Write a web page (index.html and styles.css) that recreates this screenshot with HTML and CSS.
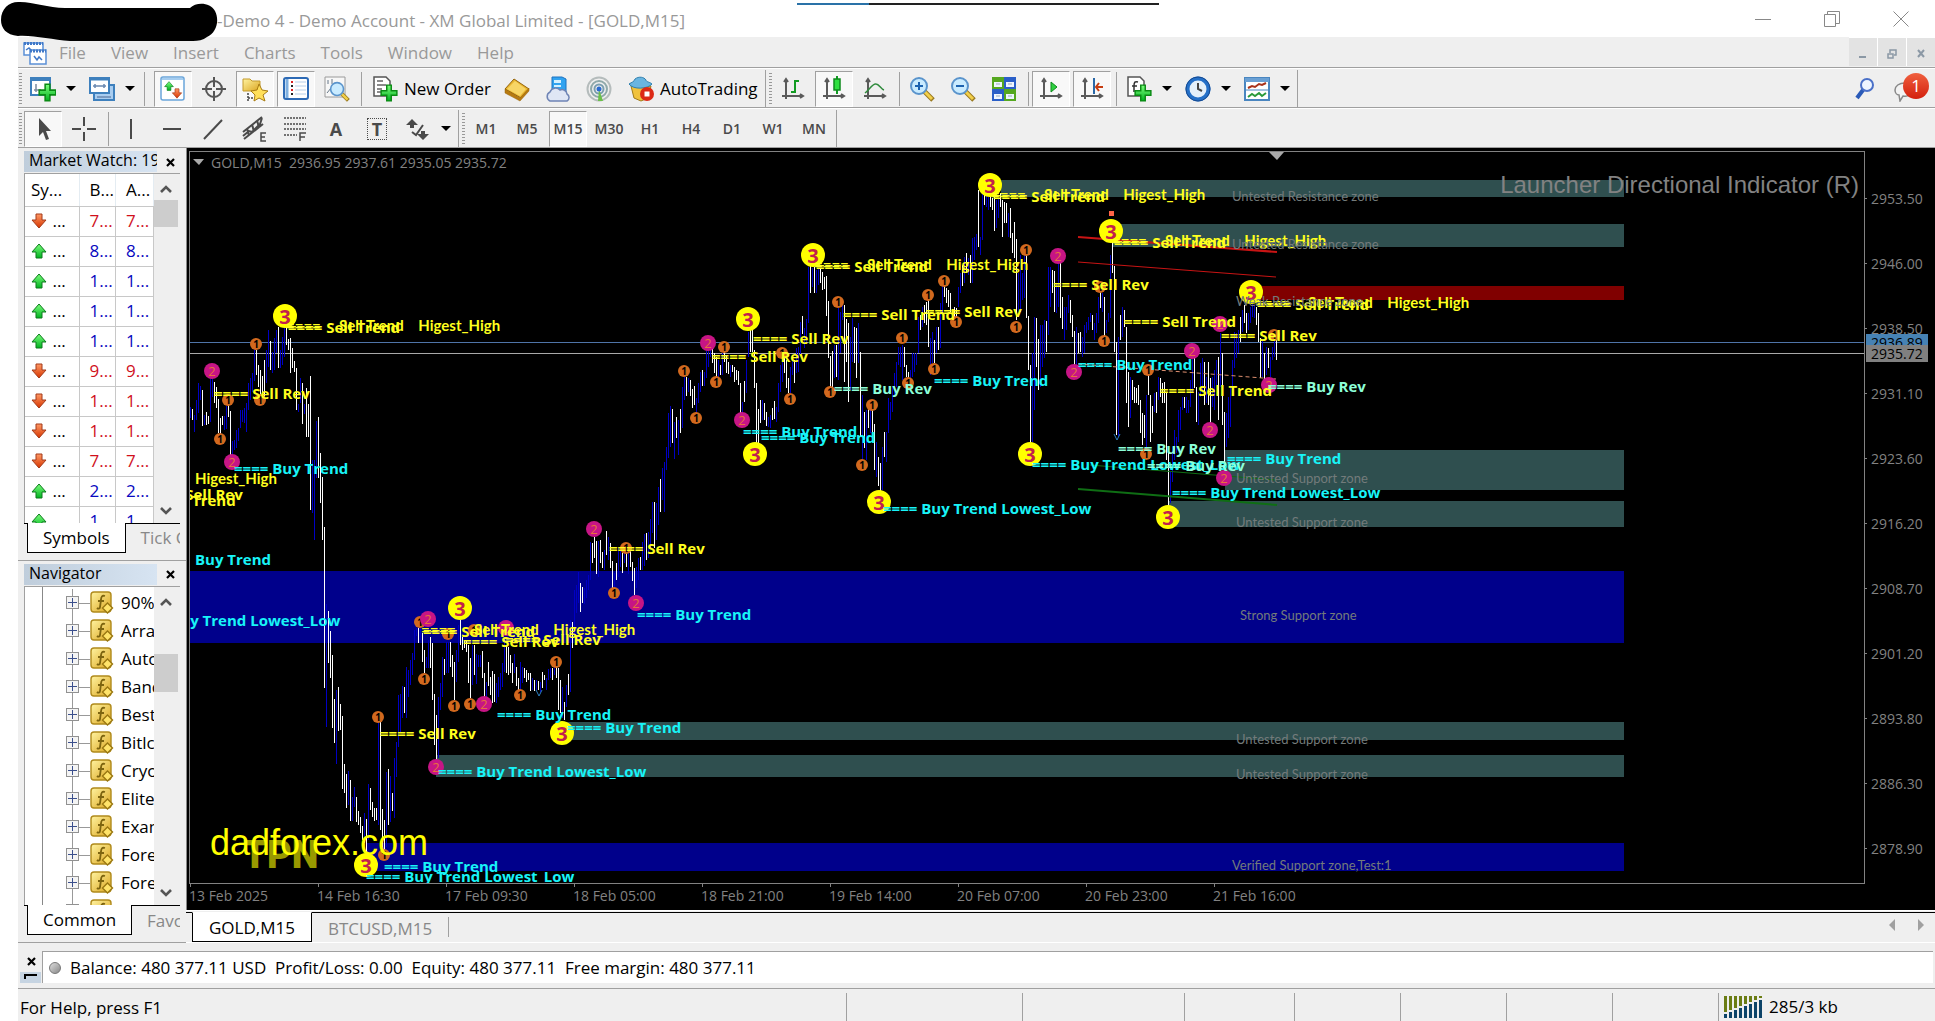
FILE: index.html
```
<!DOCTYPE html>
<html lang="en">
<head>
<meta charset="UTF-8">
<meta name="viewport" content="width=device-width, initial-scale=1.0">
<title>Demo Account - XM Global Limited - [GOLD,M15]</title>
<link rel="stylesheet" href="styles.css">
</head>
<body>
<svg class="defs" width="0" height="0">
  <defs>
    <linearGradient id="gGreen" x1="0" y1="0" x2="0" y2="1"><stop offset="0" stop-color="#7dff7d"/><stop offset="1" stop-color="#00b020"/></linearGradient>
    <linearGradient id="gGold" x1="0" y1="0" x2="1" y2="1"><stop offset="0" stop-color="#fff3a0"/><stop offset="1" stop-color="#dba520"/></linearGradient>
    <linearGradient id="gRed" x1="0" y1="0" x2="0" y2="1"><stop offset="0" stop-color="#ff9a66"/><stop offset="1" stop-color="#d63500"/></linearGradient>
    <symbol id="plus" viewBox="0 0 16 16"><path d="M6 1h4v5h5v4h-5v5H6v-5H1V6h5z" fill="url(#gGreen)" stroke="#0a8a14" stroke-width="1.3"/></symbol>
    <symbol id="axes" viewBox="0 0 26 26"><path d="M6 3v20M2 20h21M4 6l2-3 2 3M20 18l3 2-3 2" fill="none" stroke="#5a5a5a" stroke-width="2"/></symbol>
    <symbol id="down" viewBox="0 0 18 16"><path d="M6 1h6v6h4l-7 8-7-8h4z" fill="url(#gRed)" stroke="#a33a1a"/></symbol>
    <symbol id="up" viewBox="0 0 18 16"><path d="M6 15h6V9h4L9 1 2 9h4z" fill="url(#gGreen)" stroke="#0c7a1c"/></symbol>
    <symbol id="lens" viewBox="0 0 26 26"><path d="M15 15l9 9" stroke="#9a7a20" stroke-width="5"/><path d="M15 15l8 8" stroke="#f2cf4a" stroke-width="3"/><circle cx="10" cy="10" r="8" fill="#c9ebff" stroke="#5a94cc" stroke-width="2"/></symbol>
    <symbol id="fx" viewBox="0 0 24 24"><rect x="1" y="1" width="20" height="20" rx="3" fill="url(#gGold)" stroke="#b08a1c" stroke-width="1.4"/><path d="M15 5c-3-1-4 1-4 4l-1 7c0 2-2 2-3 1M8 10h6" fill="none" stroke="#7d6410" stroke-width="1.8"/><path d="M17.500 12l5 5-5 5-5-5z" fill="#ffe36a" stroke="#9a7712" stroke-width="1.4"/></symbol>
    <symbol id="chev" viewBox="0 0 14 10"><path d="M2 8l5-5 5 5" fill="none" stroke="#555" stroke-width="2.6"/></symbol>
  </defs>
</svg>

<div class="titleBar">
  <svg class="scribble" width="218" height="43" viewBox="0 0 218 43"><path d="M1 20C1 8 10 1 20 2c14 0 28 6 45 6h125c6-6 20-6 25 3 5 10 1 22-8 26-4 3-9 4-14 4H70c-18-1-36-6-52-5C6 35 1 28 1 20z"/></svg>
  <div class="progress"></div>
  <div class="titleText">-Demo 4 - Demo Account - XM Global Limited - [GOLD,M15]</div>
  <div class="winControls">
    <button aria-label="Minimize"><svg width="16" height="16"><path d="M0 8.500h16"/></svg></button>
    <button aria-label="Restore"><svg width="16" height="16"><path d="M.5 3.500h11v12h-11zM3.500 3.500v-3h12v12h-4"/></svg></button>
    <button aria-label="Close"><svg width="16" height="16"><path d="M.5.5l15 15M15.500.5l-15 15"/></svg></button>
  </div>
</div>

<div class="app">
  <div class="menuBar">
    <svg width="24" height="24" viewBox="0 0 24 24"><g fill="#fff" stroke="#5b90d6" stroke-width="1.500"><path d="M1 2h19v12H1z"/><path d="M7 9h16v14H7z"/></g><path d="M1 2.500h19M7 10h16" stroke="#3f78c8" stroke-width="3" stroke-dasharray="2 1"/><path d="M3 9l3-2 2 2M11 15l3 4 2-3 3 3" fill="none" stroke="#3f78c8" stroke-width="1.500"/></svg>
    <button>File</button><button>View</button><button>Insert</button><button>Charts</button><button>Tools</button><button>Window</button><button>Help</button>
    <div class="mdi">
      <button aria-label="Minimize chart"><svg width="10" height="10"><path d="M1 8h7"/></svg></button>
      <button aria-label="Restore chart"><svg width="10" height="10"><path d="M1 5h5v4H1zM3 4V1h6v5H7" stroke-width="1.500"/></svg></button>
      <button aria-label="Close chart"><svg width="10" height="10"><path d="M2 1l6 7M8 1L2 8"/></svg></button>
    </div>
  </div>

  <div class="toolBar">
    <i class="grip"></i>
    <button class="btn" aria-label="New chart"><svg viewBox="0 0 26 26"><path d="M1 2h19v17H1z" fill="#fff" stroke="#3e80bd" stroke-width="2"/><path d="M1 2h19v3H1z" fill="#3e80bd"/><path d="M6 8v8M4 14h7" stroke="#7a8aa0" stroke-width="1.500"/><use href="#plus" x="8" y="7" width="19" height="19"/></svg></button>
    <button class="drop" aria-label="New chart list"></button>
    <button class="btn" aria-label="Profiles"><svg viewBox="0 0 26 26"><path d="M8 9h17v15H5V9z" fill="#a9cdf0" stroke="#3e80bd" stroke-width="2"/><path d="M1 2h19v15H1z" fill="#fff" stroke="#3e80bd" stroke-width="2"/><path d="M1 3h19" stroke="#3e80bd" stroke-width="3"/><path d="M4 10h13M6 8v4M15 8v4M8 21h14" stroke="#6a88b0" stroke-width="1.500"/></svg></button>
    <button class="drop" aria-label="Profiles list"></button>
    <i class="sep"></i>
    <button class="btn on gapL" aria-label="Market Watch"><svg viewBox="0 0 26 26"><rect x="1" y="1" width="23" height="23" rx="2" fill="#fff" stroke="#6aa5da" stroke-width="1.500"/><path d="M2 3h21" stroke="#a5cdf0" stroke-width="2"/><use href="#up" x="3" y="5" width="12" height="10"/><use href="#down" x="11" y="12" width="12" height="11"/></svg></button>
    <button class="btn" aria-label="Data Window"><svg viewBox="0 0 26 26"><circle cx="13" cy="13" r="8" fill="none" stroke="#555" stroke-width="2"/><path d="M13 1v10M13 15v10M1 13h10M15 13h10" stroke="#555" stroke-width="2"/></svg></button>
    <button class="btn on" aria-label="Navigator"><svg viewBox="0 0 26 26"><path d="M1 3h7l2 2h8v10H1z" fill="url(#gGold)" stroke="#c39a2c"/><path d="M6 17v8M6 22h5" stroke="#444" stroke-width="1.500" stroke-dasharray="2 1"/><path d="M17 8l3 6 6 1-5 4 2 6-6-3-5 3 1-6-4-4 6-1z" fill="#ffdf5a" stroke="#a87c14"/></svg></button>
    <button class="btn on" aria-label="Terminal"><svg viewBox="0 0 26 26"><rect x="1" y="2" width="24" height="21" rx="2" fill="#fff" stroke="#2d6ab5" stroke-width="2"/><path d="M4 3v19" stroke="#7fb0e0" stroke-width="3"/><path d="M8 6h2M8 14h2" stroke="#d22" stroke-width="2"/><path d="M8 10h2M8 18h2" stroke="#222" stroke-width="2"/><path d="M12 6h11M12 10h11M12 14h11M12 18h11" stroke="#b8cfe8"/></svg></button>
    <button class="btn" aria-label="Strategy Tester"><svg viewBox="0 0 26 26"><path d="M1 1h20v20H1z" fill="#f7f7f7" stroke="#9a9a9a"/><path d="M3 17l4-5 4 3 5-8M4 4v4M8 3v5" fill="none" stroke="#678"/><use href="#lens" x="5" y="5" width="21" height="21"/></svg></button>
    <i class="sep"></i>
    <button class="btn wide"><svg viewBox="0 0 26 26"><path d="M2 1h12l4 4v15H2z" fill="#fff" stroke="#555" stroke-width="1.500"/><path d="M5 5h6M5 9h9M5 13h5M5 16h4" stroke="#666" stroke-width="1.500"/><use href="#plus" x="8" y="8" width="18" height="18"/></svg>New Order</button>
    <button class="btn" aria-label="MetaEditor"><svg viewBox="0 0 26 26"><path d="M1 13L10 3l15 10-8 9z" fill="#e9b52e" stroke="#94640c"/><path d="M1 13v4l15 8 9-10v-3l-9 10z" fill="#b87a10" stroke="#94640c" stroke-width=".5"/><path d="M3 13l8-8 11 8-6 7z" fill="#f7d565"/></svg></button>
    <button class="btn" aria-label="Virtual hosting"><svg viewBox="0 0 26 26"><path d="M7 1h10l4 2v13H7z" fill="#31a3f0" stroke="#1c72c0"/><path d="M9 4h7v3H9zM9 9h7v2H9z" fill="#d5f0ff"/><path d="M5 25a5 5 0 0 1 0-9 6 6 0 0 1 10-2 5 5 0 0 1 7 4 4 4 0 0 1 0 7z" fill="#dfe6f5" stroke="#6f84b5" stroke-width="1.500"/></svg></button>
    <button class="btn" aria-label="Signals"><svg viewBox="0 0 26 26" fill="none" stroke-width="2"><circle cx="13" cy="13" r="11.500" stroke="#b5bcbc"/><circle cx="13" cy="13" r="8" stroke="#8fa9aa"/><circle cx="13" cy="13" r="4.500" stroke="#7b9fb0"/><path d="M13 13l-1 12h5z" fill="#6cc04a"/><circle cx="13" cy="13" r="2.500" fill="#2a6ad0"/></svg></button>
    <button class="btn wide"><svg viewBox="0 0 26 26"><path d="M3 10h20l-3 12-7 3-7-3z" fill="#f0c23c" stroke="#a07a1a"/><path d="M1 8c3-2 5-2 6-5 4-3 9-2 11 1 0 2 4 2 6 4-4 5-19 6-23 0z" fill="#6ab5e0" stroke="#2d7fae"/><circle cx="19" cy="18" r="7" fill="#dc2a16"/><path d="M16.500 15.500h5v5h-5z" fill="#fff"/></svg>AutoTrading</button>
    <i class="sep end"></i><i class="grip"></i>
    <button class="btn" aria-label="Bar chart"><svg viewBox="0 0 26 26"><use href="#axes"/><path d="M15 4v13M15 5h4M11 16h4" stroke="#119b22" stroke-width="2"/></svg></button>
    <button class="btn on" aria-label="Candlesticks"><svg viewBox="0 0 26 26"><use href="#axes"/><path d="M16 0v18" stroke="#119b22" stroke-width="2"/><path d="M13 3h6v11h-6z" fill="#2fe03f" stroke="#0e8a1d" stroke-width="1.500"/></svg></button>
    <button class="btn" aria-label="Line chart"><svg viewBox="0 0 26 26"><use href="#axes"/><path d="M3 17C7 14 11 7 14 8c3 0 5 5 8 6" fill="none" stroke="#2f8a3c" stroke-width="1.500"/></svg></button>
    <i class="sep"></i>
    <button class="btn" aria-label="Zoom in"><svg viewBox="0 0 26 26"><use href="#lens"/><path d="M6 10h8M10 6v8" stroke="#1c62b0" stroke-width="2"/></svg></button>
    <button class="btn" aria-label="Zoom out"><svg viewBox="0 0 26 26"><use href="#lens"/><path d="M6 10h8" stroke="#1c62b0" stroke-width="2"/></svg></button>
    <button class="btn" aria-label="Tile windows"><svg viewBox="0 0 26 26"><path d="M1 1h12v12H1zM13 13h12v12H13z" fill="#55a820"/><path d="M13 1h12v12H13zM1 13h12v12H1z" fill="#2a5fc8"/><path d="M3 6h8v5H3zM15 6h8v5h-8zM3 18h8v5H3zM15 18h8v5h-8z" fill="#eef6ff"/><path d="M5 8h4M17 8h4M5 20h4M17 20h4" stroke="#9ab"/></svg></button>
    <i class="sep"></i>
    <button class="btn on" aria-label="Auto scroll"><svg viewBox="0 0 26 26"><use href="#axes"/><path d="M13 6l6 5-6 5z" fill="#2fd040" stroke="#0e8a1d"/></svg></button>
    <button class="btn on" aria-label="Chart shift"><svg viewBox="0 0 26 26"><use href="#axes"/><path d="M15 2v16" stroke="#2a68a8" stroke-width="2"/><path d="M24 11h-7M20 7l-3 4 3 4" fill="none" stroke="#c63c10" stroke-width="2"/></svg></button>
    <i class="sep"></i>
    <button class="btn" aria-label="Indicators"><svg viewBox="0 0 26 26"><path d="M2 1h12l4 4v15H2z" fill="#fff" stroke="#555" stroke-width="1.500"/><path d="M12 6c-3-1-4 0-4 4v6M6 10h5" fill="none" stroke="#333" stroke-width="1.500"/><use href="#plus" x="8" y="8" width="18" height="18"/></svg></button>
    <button class="drop" aria-label="Indicators list"></button>
    <button class="btn" aria-label="Periods"><svg viewBox="0 0 26 26"><circle cx="13" cy="13" r="10.500" fill="#e4f0fa" stroke="#2470c8" stroke-width="4"/><circle cx="13" cy="13" r="12" fill="none" stroke="#174a90"/><path d="M13 7v6l4 2" fill="none" stroke="#444" stroke-width="2"/></svg></button>
    <button class="drop" aria-label="Periods list"></button>
    <button class="btn" aria-label="Templates"><svg viewBox="0 0 26 26"><path d="M1 2h24v22H1z" fill="#fff" stroke="#4a86c0" stroke-width="2"/><path d="M1 4h24" stroke="#6aa0d4" stroke-width="4"/><path d="M1 14h24" stroke="#4a86c0"/><path d="M4 12l4-2 3 1 4-3 3 1 4-2" fill="none" stroke="#a8321a" stroke-width="2"/><path d="M4 21l4-3 3 2 4-3 3 3 4-3" fill="none" stroke="#2a9a3a" stroke-width="2"/></svg></button>
    <button class="drop" aria-label="Templates list"></button>
    <i class="sep end"></i>
    <div class="rightTools">
      <button class="btn" aria-label="Search"><svg viewBox="0 0 26 26"><path d="M5 22l6-8" stroke="#2a5ab8" stroke-width="4"/><circle cx="15" cy="9" r="6" fill="#eef5ff" stroke="#4a70c8" stroke-width="2"/></svg></button>
      <button class="btn chat" aria-label="Messages"><svg viewBox="0 0 26 26"><path d="M12 7c-6 0-10 3-10 7 0 3 2 5 4 5l1 6 3-5c5 1 10-2 10-6s-3-7-8-7z" fill="#f3f3f3" stroke="#888" stroke-width="1.500"/></svg><span class="badge">1</span></button>
    </div>
  </div>

  <div class="toolBar second">
    <i class="grip"></i>
    <button class="btn on" aria-label="Cursor"><svg viewBox="0 0 26 26"><path d="M9 2v18l4-4 3 8 3-1-3-8h5z" fill="#4a4a4a"/></svg></button>
    <button class="btn" aria-label="Crosshair"><svg viewBox="0 0 26 26"><path d="M13 1v9M13 16v9M1 13h9M16 13h9" stroke="#4a4a4a" stroke-width="2"/></svg></button>
    <i class="sep"></i>
    <button class="btn" aria-label="Vertical line"><svg viewBox="0 0 26 26"><path d="M13 3v20" stroke="#4a4a4a" stroke-width="2"/></svg></button>
    <button class="btn" aria-label="Horizontal line"><svg viewBox="0 0 26 26"><path d="M4 13h18" stroke="#4a4a4a" stroke-width="2"/></svg></button>
    <button class="btn" aria-label="Trendline"><svg viewBox="0 0 26 26"><path d="M4 23L22 4" stroke="#4a4a4a" stroke-width="2"/></svg></button>
    <button class="btn" aria-label="Channel"><svg viewBox="0 0 26 26"><path d="M2 16L21 1M3 23L22 8M6 12l2 8M11 8l2 8M16 4l2 8M2 20l6-5 3 1 8-8 2-6" fill="none" stroke="#4a4a4a" stroke-width="2"/><path d="M25 17h-5v8h5M20 21h4" fill="none" stroke="#4a4a4a" stroke-width="1.500"/></svg></button>
    <button class="btn" aria-label="Fibonacci"><svg viewBox="0 0 26 26"><path d="M2 2h22M2 8h22M2 13h22M2 19h13" stroke="#4a4a4a" stroke-width="1.500" stroke-dasharray="2 1"/><path d="M18 25v-8h6M18 21h5" fill="none" stroke="#4a4a4a" stroke-width="1.500"/></svg></button>
    <button class="btn letter">A</button>
    <button class="btn letter"><span class="boxed">T</span></button>
    <button class="btn" aria-label="Arrows"><svg viewBox="0 0 26 26"><path d="M7 3l6 6H9v3H5V9H1zM18 24l-6-6h4v-3h4v3h4z" fill="#4a4a4a"/><path d="M7 16l4 3 7-10" fill="none" stroke="#4a4a4a" stroke-width="2"/></svg></button>
    <button class="drop" aria-label="Arrows list"></button>
    <i class="sep end"></i><i class="grip"></i>
    <button class="btn tf">M1</button>
    <button class="btn tf">M5</button>
    <button class="btn tf on">M15</button>
    <button class="btn tf">M30</button>
    <button class="btn tf">H1</button>
    <button class="btn tf">H4</button>
    <button class="btn tf">D1</button>
    <button class="btn tf">W1</button>
    <button class="btn tf">MN</button>
    <i class="sep end"></i>
  </div>

  <div class="main">
    <div class="side">
      <div class="panel watch">
        <div class="panelHead"><h2>Market Watch: 19</h2><button class="close" aria-label="Close Market Watch"><svg width="9" height="9"><path d="M1 1l7 7M8 1L1 8"/></svg></button></div>
        <div class="list">
          <div class="listBody">
            <table>
              <thead><tr><th>Sy...</th><th>B...</th><th>A...</th></tr></thead>
              <tbody id="symbols"></tbody>
            </table>
          </div>
          <div class="scroll"><svg width="14" height="10"><use href="#chev"/></svg><i class="thumb"></i><svg class="flip" width="14" height="10"><use href="#chev"/></svg></div>
        </div>
        <div class="tabs"><button class="tab active">Symbols</button><button class="tab">Tick Chart</button></div>
      </div>
      <div class="panel navi">
        <div class="panelHead"><h2>Navigator</h2><button class="close" aria-label="Close Navigator"><svg width="9" height="9"><path d="M1 1l7 7M8 1L1 8"/></svg></button></div>
        <div class="list">
          <div class="listBody"><ul class="tree" id="tree"></ul></div>
          <div class="scroll"><svg width="14" height="10"><use href="#chev"/></svg><i class="thumb"></i><svg class="flip" width="14" height="10"><use href="#chev"/></svg></div>
        </div>
        <div class="tabs"><button class="tab active">Common</button><button class="tab">Favorites</button></div>
      </div>
    </div>

    <div class="work">
      <div class="chart">
        <div class="plotCol">
          <div class="plot">
            <svg class="canvas" id="canvas"><g id="scene" transform="translate(-190 -152)"></g></svg>
            <div class="quote">GOLD,M15  2936.95 2937.61 2935.05 2935.72</div>
            <div class="launcher">Launcher Directional Indicator (R)</div>
          </div>
          <div class="timeAxis" id="timeAxis"></div>
        </div>
        <div class="priceAxis" id="priceAxis">
          <span class="mark ask">2936.89</span>
          <span class="mark bid">2935.72</span>
        </div>
      </div>
      <div class="chartTabs">
        <button class="tab active">GOLD,M15</button><button class="tab">BTCUSD,M15</button>
        <span class="tabArrows"><svg width="6" height="12"><path d="M6 0v12L0 6z"/></svg><svg width="6" height="12"><path d="M0 0v12l6-6z"/></svg></span>
      </div>
    </div>
  </div>

  <div class="terminal">
    <div class="termSide"><button class="close" aria-label="Close Terminal"><svg width="9" height="9"><path d="M1 1l7 7M8 1L1 8"/></svg></button><svg class="termMark" width="21" height="11"><path d="M4 3h13M5 3v4"/></svg></div>
    <div class="balance"><i class="dot"></i>Balance: 480 377.11 USD  Profit/Loss: 0.00  Equity: 480 377.11  Free margin: 480 377.11</div>
  </div>

  <div class="status">
    <div class="help">For Help, press F1</div>
    <i></i><i></i><i></i><i></i><i></i><i></i><i></i>
    <div class="traffic"><svg width="39" height="22" id="bars"></svg>285/3 kb</div>
  </div>
</div>

<script>
  const NS = "http://www.w3.org/2000/svg";
  const scene = document.getElementById("scene");

  function add(parent, tag, attrs, text) {
    const el = document.createElementNS(NS, tag);
    for (const k in attrs) el.setAttribute(k, attrs[k]);
    if (text) el.textContent = text;
    parent.appendChild(el);
    return el;
  }

  // market watch rows
  const rows = [["down", "7"], ["up", "8"], ["up", "1"], ["up", "1"], ["up", "1"], ["down", "9"], ["down", "1"], ["down", "1"], ["down", "7"], ["up", "2"], ["up", "1"]];
  document.getElementById("symbols").innerHTML = rows.map(([dir, n]) =>
    `<tr class="${dir}"><td><svg width="18" height="16"><use href="#${dir}"/></svg> ...</td><td>${n}...</td><td>${n}...</td></tr>`).join("");

  // navigator tree
  const items = ["90%", "Array", "Auto", "Bands", "Best", "Bitlc", "Cryo", "Elite", "Exam", "Forex", "Fore", "Fore"];
  document.getElementById("tree").innerHTML = items.map(t =>
    `<li><span class="expand"></span><svg width="24" height="24"><use href="#fx"/></svg>${t}</li>`).join("");

  // axes
  const prices = ["2953.50", "2946.00", "2938.50", "2931.10", "2923.60", "2916.20", "2908.70", "2901.20", "2893.80", "2886.30", "2878.90"];
  document.getElementById("priceAxis").insertAdjacentHTML("afterbegin", prices.map(p => `<span class="price">${p}</span>`).join(""));
  const times = ["13 Feb 2025", "14 Feb 16:30", "17 Feb 09:30", "18 Feb 05:00", "18 Feb 21:00", "19 Feb 14:00", "20 Feb 07:00", "20 Feb 23:00", "21 Feb 16:00"];
  document.getElementById("timeAxis").innerHTML = times.map(t => `<span>${t}</span>`).join("");

  // zones: x, y, height, type
  const zones = [
    [1001, 180, 17, "slate"], [1112, 224, 23, "slate"], [1252, 286, 14, "maroon"], [1225, 450, 40, "slate"],
    [1168, 501, 26, "slate"], [190, 571, 72, "navy"], [562, 722, 18, "slate"], [436, 755, 22, "slate"], [366, 843, 28, "navy"]
  ];
  zones.forEach(([x, y, h, c]) => add(scene, "rect", { x, y, width: 1624 - x, height: h, class: c }));

  add(scene, "path", { d: "M190 342.5H2600", class: "askLine" });
  add(scene, "path", { d: "M190 353.5H2600", class: "bidLine" });

  // bars: x, colour (b = up, w = down), high-low
  const bars = `190b407-418 192w409-420 194b415-432 196b400-420 198b383-413 200b386-400 202w390-426 204b415-425 206w412-425 208w416-424 210b378-422 212b378-397 214w382-403 216w387-408 218w399-433
  220w418-435 222w416-425 224b416-430 226b406-429 228w403-417 230w411-455 232b441-455 234b440-450 236b430-448 238b428-441 240b410-428 242b410-422 244b408-423 246b403-432 248b383-410
  250b378-400 252b373-392 254b348-381 256w350-375 258w365-387 260w370-395 262w376-393 264w360-397 266b350-383 268b330-367 270w341-370 272b352-373 274b338-370 276b330-353 278w327-368
  280b350-368 282b337-365 284b327-357 286w327-345 288w339-350 290w338-373 292w348-368 294w361-372 296w368-410 298b404-412 300b378-403 302w383-424 304b404-414 306w388-437 308w404-437
  310w376-510 312b460-513 314b460-540 316b421-478 318w417-478 320w453-503 322w477-540 324w527-688 326b604-727 328w611-663 330w631-678 332w655-728 334w699-743 336b690-764 338w687-731
  340w704-730 342w716-789 344w764-793 346w774-808 348b771-805 350w780-821 352b797-821 354b787-807 356w797-822 358w811-825 360w817-833 362w826-840 364b813-843 366w819-858 368b784-840
  370w788-810 372w802-817 374w808-821 376w808-820 378b720-825 380w722-830 382w809-847 384w820-850 386b772-847 388w769-825 390b776-822 392w793-811 394b758-818 396b742-777 398b695-747
  400b694-732 402b686-718 404w687-713 406b667-718 408b670-697 410b660-685 412b653-675 414b630-660 416b628-636 418w628-643 420b628-640 422w633-662 424w650-673 426b657-668 428b640-668
  430w637-668 432w643-700 434w694-745 436w715-760 438b697-758 440b683-710 442b657-697 444w659-675 446b642-673 448b642-673 450w642-667 452w655-677 454w662-700 456b650-682 458b625-662
  460w620-645 462w637-650 464w640-648 466w640-652 468w645-683 470w658-698 472b645-685 474w645-675 476b654-684 478b655-667 480b655-667 482w651-678 484w673-697 486b682-698 488w662-686
  490w677-695 492w671-703 494w674-702 496b683-703 498b677-697 500b673-690 502b663-687 504b637-672 506w645-673 508w647-675 510w655-673 512w663-683 514b654-673 516w667-686 518w678-690
  520b662-690 522b667-683 524w668-678 526w670-682 528w673-680 530w673-691 532b678-690 534w680-691 536b680-690 538w681-690 540b682-692 542w672-688 544w675-680 546b678-690 548b669-680
  550b668-678 552w668-680 554b667-675 556w663-678 558w668-710 560w680-713 562b687-718 564w702-720 566b685-707 568w674-695 570b620-692 572w622-648 574b590-637 576b585-613 578b572-603
  580w583-612 582w587-603 584b588-604 586b580-598 588b575-590 590b542-580 592w543-563 594w537-558 596w541-574 598b541-577 600w540-563 602w552-568 604b550-570 606w531-555 608b537-560
  610w543-568 612w561-588 614b573-590 616w563-580 618b548-577 620b550-567 622w553-573 624b548-563 626w548-567 628b550-574 630w550-567 632w562-581 634w568-595 636b567-588 638b558-580
  640w557-570 642b542-570 644b534-566 646w533-560 648b532-558 650b519-548 652b502-533 654w502-548 656b503-540 658b487-525 660w479-512 662b468-500 664b462-512 666b447-470 668b413-458
  670b406-447 672w409-443 674b422-459 676w417-438 678b420-455 680w409-433 682b387-428 684b377-400 686w377-396 688b378-392 690w380-396 692w389-408 694w386-405 696b398-413 698b383-403
  700b372-392 702w370-386 704b372-386 706b348-378 708b348-367 710b347-357 712w348-363 714w353-373 716w357-378 718b360-378 720w365-375 722b353-375 724w350-362 726w355-373 728w362-374
  730b365-377 732w365-372 734w367-382 736w370-380 738w371-385 740w383-413 742b402-413 744w381-402 746b360-393 748b332-357 750w330-352 752w330-352 754w350-388 756w383-450 758w409-443
  760w400-423 762b400-420 764w403-420 766w412-426 768b417-427 770b415-428 772w408-420 774w401-419 776b407-422 778b383-412 780b365-392 782b357-382 784w355-373 786w360-388 788w378-393
  790b367-393 792b360-375 794w360-383 796b348-373 798b347-372 800b322-357 802w316-334 804b328-348 806b319-342 808b267-323 810w266-293 812b268-287 814w267-293 816b270-293 818b268-285
  820w268-283 822w272-290 824w277-289 826w276-316 828w301-358 830w356-387 832w351-388 834b345-378 836w345-377 838b308-380 840b312-353 842b303-320 844w305-382 846w319-362 848w323-402
  850b337-390 852b318-362 854w327-363 856w328-378 858b323-363 860w352-437 862b395-460 864w412-448 866b410-460 868w403-428 870b405-433 872w410-432 874w424-470 876b442-477 878w457-486
  880w463-492 882b447-490 884w432-457 886b432-462 888b398-433 890b402-420 892b387-412 894b373-397 896b362-387 898b347-365 900b347-367 902b345-380 904w347-367 906w365-377 908w372-383
  910b370-380 912b353-377 914b353-372 916b353-365 918b317-353 920w315-330 922b307-327 924w305-323 926w302-325 928w300-347 930b338-375 932b332-363 934w340-363 936b327-353 938w327-350
  940b303-348 942b285-317 944w282-297 946w288-303 948w290-307 950w293-312 952b310-320 954w307-318 956w308-317 958b287-307 960b273-293 962w265-286 964b257-283 966w253-273 968b258-275
  970w255-283 972b238-283 974b237-260 976b234-250 978w190-247 980b237-255 982b190-240 984w190-205 986b195-207 988b197-210 990w195-207 992w198-210 994w197-231 996b200-228 998b198-218
  1000w193-207 1002w200-237 1004w202-223 1006w203-223 1008b213-237 1010w208-238 1012w233-253 1014w222-258 1016w239-320 1018b273-317 1020b255-312 1022b273-300 1024b253-298 1026w255-318
  1028w316-370 1030w365-445 1032b353-442 1034b317-410 1036w318-367 1038w339-390 1040b325-387 1042b325-367 1044b320-358 1046w321-352 1048b267-335 1050b267-307 1052w270-293 1054w271-312
  1056b283-313 1058b263-307 1060w263-318 1062w297-329 1064b307-340 1066b307-330 1068b295-313 1070w300-323 1072w315-337 1074w331-367 1076b327-365 1078w333-353 1080w332-352 1082b337-357
  1084b325-353 1086b322-333 1088b317-330 1090b313-322 1092w315-330 1094b323-340 1096b313-333 1098b297-323 1100w292-308 1102b293-312 1104w297-337 1106b320-333 1108b313-322 1110b255-318
  1112w242-273 1114w266-352 1116w342-435 1118b337-437 1120w315-340 1122b307-337 1124w310-327 1126w327-403 1128w372-427 1130b377-418 1132w380-400 1134w387-403 1136w388-403 1138w385-405
  1140w400-433 1142w413-445 1144w415-438 1146b395-448 1148w373-395 1150w395-442 1152w406-433 1154b393-412 1156w392-413 1158b377-400 1160w378-397 1162w383-403 1164w382-403 1166w393-460
  1168w450-507 1170b472-503 1172b447-482 1174b430-460 1176b437-453 1178b410-442 1180b407-430 1182b397-410 1184w397-408 1186b397-413 1188b400-413 1190b380-407 1192b357-392 1194w358-388
  1196w387-422 1198b392-425 1200b363-397 1202b358-393 1204w362-405 1206b377-403 1208w362-405 1210w378-423 1212b377-407 1214b370-410 1216b360-388 1218w357-420 1220b333-387 1222w353-425
  1224w412-473 1226b413-447 1228b397-438 1230b387-427 1232b360-390 1234b332-368 1236b333-358 1238b330-353 1240w317-342 1242b310-332 1244w305-323 1246w313-333 1248b313-330 1250b307-323
  1252b303-317 1254b305-318 1256w307-325 1258w313-342 1260w338-378 1262b340-377 1264w353-380 1266b347-375 1268w348-368 1270b357-377 1272b347-360 1274b340-357 1276w340-360`;
  for (const m of bars.matchAll(/(\d+)([bw])(\d+)-(\d+)/g)) {
    add(scene, "rect", { x: m[1], y: m[3], width: 1, height: m[4] - m[3], class: m[2] === "b" ? "barUp" : "barDown" });
  }

  // channel lines
  add(scene, "path", { d: "M1078 237L1277 252", class: "red thick" });
  add(scene, "path", { d: "M1078 262L1276 277", class: "red" });
  add(scene, "path", { d: "M1078 489L1277 505", class: "green thick" });
  add(scene, "path", { d: "M1090 465L1276 480", class: "green" });
  add(scene, "path", { d: "M1078 364L1276 379", class: "salmon" });
  add(scene, "path", { d: "M1114 434l3 6 3-6M536 690l3 6 3-6", class: "tick" });
  add(scene, "rect", { x: 1109, y: 211, width: 5, height: 5, fill: "#ff6347" });
  add(scene, "path", { d: "M1269 152h15l-7 8zM193 159h11l-5 6z", fill: "#a9a9a9" });

  // swing points
  const swings = {
    1: [[256,344],[228,400],[260,400],[220,439],[420,622],[424,679],[454,706],[470,704],[520,695],[556,662],[448,634],[474,630],[378,717],[384,855],[626,548],[614,593],[684,371],[724,347],[716,382],[696,418],[782,353],[790,399],[838,302],[830,392],[872,405],[862,465],[928,295],[944,281],[956,322],[902,338],[934,369],[908,383],[1026,250],[1016,327],[1100,287],[1104,341],[1148,370],[1146,454],[1274,335]],
    2: [[212,371],[232,462],[428,619],[506,628],[484,704],[436,767],[594,529],[636,603],[708,343],[742,420],[1058,256],[1074,372],[1220,324],[1192,351],[1210,430],[1224,478],[1269,385]],
    3: [[285,316],[460,608],[366,865],[562,733],[748,319],[755,454],[813,255],[879,502],[990,185],[1111,231],[1251,292],[1030,454],[1168,517]]
  };
  const radius = { 1: 6, 2: 8, 3: 12 };
  const drop = { 1: 4, 2: 5, 3: 8 };
  for (const n in swings) {
    swings[n].forEach(([x, y]) => {
      add(scene, "circle", { cx: x, cy: y, r: radius[n], class: "swing" + n });
      add(scene, "text", { x, y: y + drop[n], class: "num" + n }, n);
    });
  }

  // signal labels: x, baseline, text, colour
  const SR = "==== Sell Rev", ST = "==== Sell Trend", BT = "==== Buy Trend", BR = "==== Buy Rev", BL = "==== Buy Trend Lowest_Low";
  const labels = [
    [214, 399, SR, "sell"], [195, 484, "Higest_High", "sell high"], [147, 500, SR, "sell"], [192, 506, "Trend", "sell"],
    [463, 647, SR, "sell"], [505, 645, SR, "sell"], [380, 739, SR, "sell"], [609, 554, SR, "sell"], [753, 344, SR, "sell"],
    [712, 362, SR, "sell"], [843, 320, ST, "sell"], [926, 317, SR, "sell"], [1053, 290, SR, "sell"], [1124, 327, ST, "sell"],
    [1221, 341, SR, "sell"], [1160, 396, ST, "sell"],
    [234, 474, BT, "buy"], [195, 565, "Buy Trend", "buy"], [132, 626, BL, "buy"], [497, 720, BT, "buy"], [567, 733, BT, "buy"],
    [438, 777, BL, "buy"], [637, 620, BT, "buy"], [384, 872, BT, "buy"], [366, 882, BL, "buy"], [743, 437, BT, "buy"],
    [761, 443, BT, "buy"], [883, 514, BL, "buy"], [934, 386, BT, "buy"], [1078, 370, BT, "buy"], [1032, 470, BL, "buy"],
    [1227, 464, BT, "buy"], [1172, 498, BL, "buy"],
    [834, 394, BR, "rev"], [1118, 454, BR, "rev"], [1147, 471, BR, "rev"], [1268, 392, BR, "rev"]
  ];
  [[286, 333], [421, 637], [814, 272], [991, 202], [1112, 248], [1255, 310]].forEach(([x, y]) => {
    labels.push([x + 2, y, ST, "sell"], [x, y - 2, "====     Sell Trend    Higest_High", "sell high"]);
  });
  labels.forEach(([x, y, t, c]) => add(scene, "text", { x, y, class: "label " + c }, t));

  // zone captions
  [[1232, 201, "Untested Resistance zone"], [1232, 249, "Untested Resistance zone"], [1236, 306, "Weak Resistance zone"],
   [1236, 483, "Untested Support zone"], [1236, 527, "Untested Support zone"], [1240, 620, "Strong Support zone"],
   [1236, 744, "Untested Support zone"], [1236, 779, "Untested Support zone"], [1232, 870, "Verified Support zone,Test:1"]
  ].forEach(([x, y, t]) => add(scene, "text", { x, y, class: "caption" }, t));

  add(scene, "text", { x: 243, y: 868, class: "tpn" }, "TPN");
  add(scene, "text", { x: 210, y: 855, class: "brand" }, "dadforex.com");

  // connection bars
  const sig = document.getElementById("bars");
  for (let i = 0; i < 8; i++) {
    const h = 4 + i * 2;
    add(sig, "rect", { x: i * 5, y: 22 - h, width: 3, height: h, fill: "#0d4468" });
    add(sig, "rect", { x: i * 5, y: 0, width: 3, height: 20 - h, fill: "#6b7d14" });
  }
</script>
</body>
</html>
```
FILE: styles.css
```
* {
  box-sizing: border-box;
}
body {
  margin: 0;
  height: 100vh;
  display: flex;
  flex-direction: column;
  overflow: hidden;
  background: #fff;
  color: #000;
  font-family: "Open Sans", "Noto Sans", sans-serif;
  font-size: 17px;
}
button {
  font: inherit;
  color: inherit;
  background: none;
  border: none;
  padding: 0;
  cursor: pointer;
}
h2 {
  margin: 0;
  font-weight: 400;
}
.defs {
  position: absolute;
}

/* title bar */
.titleBar {
  height: 37px;
  flex: none;
  display: flex;
  align-items: center;
  justify-content: space-between;
  position: relative;
  padding-left: 217px;
  color: #999;
}
.scribble {
  position: absolute;
  left: 0;
  top: 0;
  z-index: 5;
}
.progress {
  position: absolute;
  top: 3px;
  left: 797px;
  width: 362px;
  height: 2px;
  background: linear-gradient(to right, #2a72a8 72px, #222 72px);
}
.titleText {
  white-space: nowrap;
  padding-top: 3px;
}
.winControls {
  display: flex;
}
.winControls button {
  width: 69px;
  height: 37px;
  padding-top: 4px;
}
.winControls svg {
  fill: none;
  stroke: #888;
}

.app {
  flex: 1;
  min-height: 0;
  margin-left: 18px;
  background: #efefef;
  display: flex;
  flex-direction: column;
}

/* menu */
.menuBar {
  height: 32px;
  flex: none;
  display: flex;
  align-items: center;
  padding-left: 5px;
  color: #999;
  border-bottom: 1px solid #fff;
  box-shadow: inset 0 -1px #a0a0a0;
}
.menuBar > button {
  padding: 0 13px 0 12px;
}
.mdi {
  margin-left: auto;
  display: flex;
  gap: 1px;
  align-self: flex-start;
  padding-top: 1px;
  background: #fff;
}
.mdi button {
  width: 28px;
  height: 28px;
  background: #e3e3e3;
}
.mdi svg {
  fill: none;
  stroke: #8b98a5;
  stroke-width: 2;
}

/* tool bars */
.toolBar {
  height: 40px;
  flex: none;
  display: flex;
  align-items: center;
  border-bottom: 1px solid #fff;
  box-shadow: inset 0 -1px #a0a0a0;
}
.second {
  height: 39px;
  border-bottom: none;
}
.grip {
  width: 3px;
  height: 32px;
  margin: 0 2px 0 1px;
  background: repeating-linear-gradient(#999 0 1px, #efefef 1px 3px);
}
.sep {
  width: 1px;
  height: 34px;
  margin: 0 3px 0 2px;
  background: #a0a0a0;
}
.sep.end {
  height: 38px;
  margin: 0 2px 0 0;
}
.btn {
  width: 38px;
  height: 36px;
  margin-right: 3px;
  display: flex;
  align-items: center;
  justify-content: center;
}
.btn svg {
  width: 26px;
  height: 26px;
}
.btn.on {
  background: #f8f8f8;
  border: 1px solid #fff;
  border-top-color: #a0a0a0;
  border-left-color: #a0a0a0;
}
.btn.wide {
  width: auto;
  gap: 6px;
  padding: 0 4px 0 7px;
  white-space: nowrap;
}
.btn:has(+ .drop) {
  margin-right: 0;
}
.drop {
  width: 18px;
  height: 36px;
  margin-right: 3px;
  display: flex;
  align-items: center;
  justify-content: center;
}
.drop::before {
  content: '';
  border: 5px solid transparent;
  border-top-color: #000;
  border-bottom: none;
}
.gapL {
  margin-left: 6px;
}
.rightTools {
  margin-left: auto;
  display: flex;
}
.chat {
  position: relative;
  margin-right: 10px;
}
.badge {
  position: absolute;
  top: 2px;
  right: -4px;
  width: 26px;
  height: 26px;
  line-height: 26px;
  border-radius: 50%;
  background: linear-gradient(#f0603f, #d3200d);
  color: #fff;
}
.letter, .tf {
  color: #4a4a4a;
  font-size: 14px;
  font-weight: 600;
}
.letter {
  font-size: 18px;
  font-weight: 700;
}
.boxed {
  width: 20px;
  line-height: 20px;
  border: 1px dotted #4a4a4a;
}

/* side panels */
.main {
  flex: 1;
  min-height: 0;
  display: flex;
}
.side {
  width: 168px;
  flex: none;
  display: flex;
  flex-direction: column;
}
.panel {
  min-height: 0;
  display: flex;
  flex-direction: column;
  padding: 3px 6px 7px;
  border-bottom: 1px solid #a0a0a0;
}
.watch {
  flex: 413 1 0;
}
.navi {
  flex: 382 1 0;
}
.panelHead {
  height: 22px;
  flex: none;
  display: flex;
}
.panelHead h2 {
  width: 133px;
  height: 21px;
  padding-left: 5px;
  line-height: 18px;
  font-size: 16px;
  white-space: nowrap;
  overflow: hidden;
  background: linear-gradient(to right, #bfcddb, #d7e4f2);
}
.close {
  flex: 1;
  display: flex;
  align-items: center;
  justify-content: center;
}
.panelHead .close {
  padding-left: 3px;
}
.close svg {
  stroke: #000;
  stroke-width: 2.2;
}
.list {
  flex: 1;
  min-height: 0;
  display: flex;
  border-top: 1px solid #a0a0a0;
  border-left: 1px solid #a0a0a0;
}
.listBody {
  width: 129px;
  overflow: hidden;
  background: #fff;
}
.scroll {
  width: 24px;
  display: flex;
  flex-direction: column;
  align-items: center;
  padding: 10px 0 7px;
}
.thumb {
  width: 24px;
  height: 27px;
  margin-top: 6px;
  background: #cdcdcd;
}
.navi .thumb {
  height: 38px;
  margin-top: 47px;
}
.flip {
  margin-top: auto;
  transform: rotate(180deg);
}
table {
  width: 129px;
  table-layout: fixed;
  border-collapse: collapse;
}
th, td {
  height: 30px;
  padding: 0 0 0 10px;
  border-right: 1px solid #c8c8c8;
  border-bottom: 1px solid #c8c8c8;
  text-align: left;
  font-weight: 400;
  line-height: 24px;
  white-space: nowrap;
}
th {
  height: 32px;
  border-right-color: #e4ecf2;
}
th:first-child {
  width: 54px;
  padding-left: 6px;
}
th:nth-child(3) {
  width: 38px;
}
th, td:first-child {
  color: #000;
}
td:first-child {
  padding-left: 5px;
}
td svg {
  vertical-align: -2px;
}
tr.down {
  color: #d0101c;
}
tr.up {
  color: #0808c0;
}
.tree {
  list-style: none;
  margin: 0;
  padding: 2px 0 0;
  background: linear-gradient(#888, #888) 17px 0 / 1px 100% no-repeat;
}
.tree li {
  height: 28px;
  display: flex;
  align-items: center;
  gap: 7px;
  padding-left: 41px;
  background: linear-gradient(#999, #999) 47px 0 / 1px 100% no-repeat, linear-gradient(#999, #999) 54px 14px / 11px 1px no-repeat;
}
.tree svg {
  flex: none;
  margin-left: 4px;
}
.expand {
  width: 13px;
  height: 13px;
  flex: none;
  border: 1px solid #919191;
  background: linear-gradient(#3b4f8c, #3b4f8c) center / 9px 1px no-repeat, linear-gradient(#3b4f8c, #3b4f8c) center / 1px 9px no-repeat, #f4f4f4;
}
.tabs {
  height: 30px;
  flex: none;
  display: flex;
  overflow: hidden;
  box-shadow: inset 0 1px #000;
}
.tab {
  color: #888;
  padding: 0 15px;
  white-space: nowrap;
}
.tab.active {
  color: #000;
  background: #fff;
  border: 1px solid #000;
  border-top: none;
}
.tabs .active {
  margin-left: 3px;
}

/* chart */
.work {
  flex: 1;
  min-width: 0;
  display: flex;
  flex-direction: column;
  background: #efefef;
}
.chart {
  flex: 1;
  min-height: 0;
  display: flex;
  padding: 3px 0 0 2px;
  background: #000;
  border-left: 1px solid #888;
  color: #828282;
  font-size: 14px;
}
.plotCol {
  flex: 1;
  min-width: 0;
  display: flex;
  flex-direction: column;
}
.plot {
  flex: 1;
  min-height: 0;
  position: relative;
  overflow: hidden;
  border: 1px solid #828282;
}
.canvas {
  display: block;
  width: 100%;
  height: 100%;
}
.quote {
  position: absolute;
  left: 21px;
  top: 1px;
  white-space: pre;
}
.launcher {
  position: absolute;
  right: 5px;
  top: 19px;
  font: 24px "Liberation Sans", sans-serif;
}
.timeAxis {
  height: 26px;
  flex: none;
  display: flex;
}
.timeAxis span {
  width: 128px;
  flex: none;
  line-height: 24px;
  position: relative;
  white-space: nowrap;
}
.timeAxis span::before {
  content: '';
  position: absolute;
  left: 1px;
  top: 0;
  width: 1px;
  height: 3px;
  background: #828282;
}
.priceAxis {
  width: 70px;
  flex: none;
  position: relative;
  display: flex;
  flex-direction: column;
  padding-top: 15px;
}
.price {
  height: 65px;
  flex: none;
  display: flex;
  align-items: center;
}
.price::before {
  content: '';
  width: 2px;
  height: 1px;
  margin-right: 4px;
  background: #828282;
}
.mark {
  position: absolute;
  left: 1px;
  width: 62px;
  height: 17px;
  padding-left: 5px;
  line-height: 17px;
  color: #000;
}
.ask {
  top: 183px;
  background: #4682b4;
}
.bid {
  top: 194px;
  background: #808080;
}
.slate { fill: #2f4f4f; }
.maroon { fill: #800000; }
.navy { fill: #00008b; }
.barUp { fill: #0000c4; }
.barDown { fill: #fff; }
.askLine { stroke: #4f74a8; }
.bidLine { stroke: #a9a9a9; }
.red { stroke: #c81414; }
.green { stroke: #0f6e14; }
.thick { stroke-width: 2; }
.salmon {
  stroke: #e09070;
  stroke-dasharray: 4 3;
}
.tick {
  fill: none;
  stroke: #2a7fc0;
}
.swing1 { fill: #d2691e; }
.swing2 { fill: #c71585; }
.swing3 { fill: #ff0; }
.num1, .num2, .num3 {
  text-anchor: middle;
  font-weight: 700;
  font-size: 10px;
}
.num2 {
  font-size: 13px;
  font-weight: 400;
  fill: #e8703c;
}
.num3 {
  font-size: 20px;
  fill: #c2204c;
}
.label {
  font: 700 15px "Open Sans", sans-serif;
  white-space: pre;
}
.high {
  font-family: Lato, sans-serif;
}
.sell { fill: #ffff1e; }
.buy { fill: #18f4f8; }
.rev { fill: #8cffd8; }
.caption {
  font: 13px Lato, sans-serif;
  fill: #737b7b;
}
.tpn {
  font: 900 38px Roboto, sans-serif;
  fill: #999900;
}
.brand {
  font: 36px "Liberation Sans", sans-serif;
  fill: #ff0;
}
.chartTabs {
  height: 33px;
  flex: none;
  display: flex;
  padding: 2px 0 1px 6px;
  box-shadow: inset 0 1px #fff, inset 0 -1px #fff;
  background: linear-gradient(#000, #000) 0 2px / 100% 1px no-repeat;
}
.chartTabs .tab {
  padding: 0 16px;
}
.chartTabs .tab.active {
  border-top: 1px solid #fff;
}
.chartTabs .tab + .tab {
  margin: 5px 0;
  border-right: 1px solid #a0a0a0;
}
.tabArrows {
  margin-left: auto;
  display: flex;
  align-items: center;
  gap: 23px;
  padding: 0 11px 4px 0;
}
.tabArrows path {
  fill: #a0a0a0;
}

/* terminal and status */
.terminal {
  height: 46px;
  flex: none;
  display: flex;
  padding: 8px 2px 5px;
  border-bottom: 1px solid #a0a0a0;
}
.termSide {
  width: 22px;
  display: flex;
  flex-direction: column;
}
.termMark {
  background: #c6d4e2;
  fill: none;
  stroke: #000;
  stroke-width: 2;
}
.balance {
  flex: 1;
  display: flex;
  align-items: center;
  gap: 9px;
  padding-left: 6px;
  background: #fff;
  border-top: 1px solid #a0a0a0;
  border-left: 1px solid #a0a0a0;
  white-space: pre;
}
.dot {
  width: 12px;
  height: 12px;
  border-radius: 50%;
  border: 1px solid #777;
  background: linear-gradient(135deg, #ddd, #888);
}
.status {
  height: 32px;
  flex: none;
  display: flex;
  line-height: 38px;
}
.help {
  flex: 1;
  padding-left: 2px;
}
.status i {
  width: 106px;
  margin-top: 4px;
  border-left: 1px solid #a0a0a0;
}
.status i:nth-of-type(1) {
  width: 176px;
}
.status i:nth-of-type(2) {
  width: 162px;
}
.status i:nth-of-type(3) {
  width: 110px;
}
.traffic {
  width: 217px;
  margin-top: 4px;
  padding-left: 5px;
  border-left: 1px solid #a0a0a0;
  display: flex;
  align-items: center;
  gap: 6px;
  line-height: 30px;
}
```
